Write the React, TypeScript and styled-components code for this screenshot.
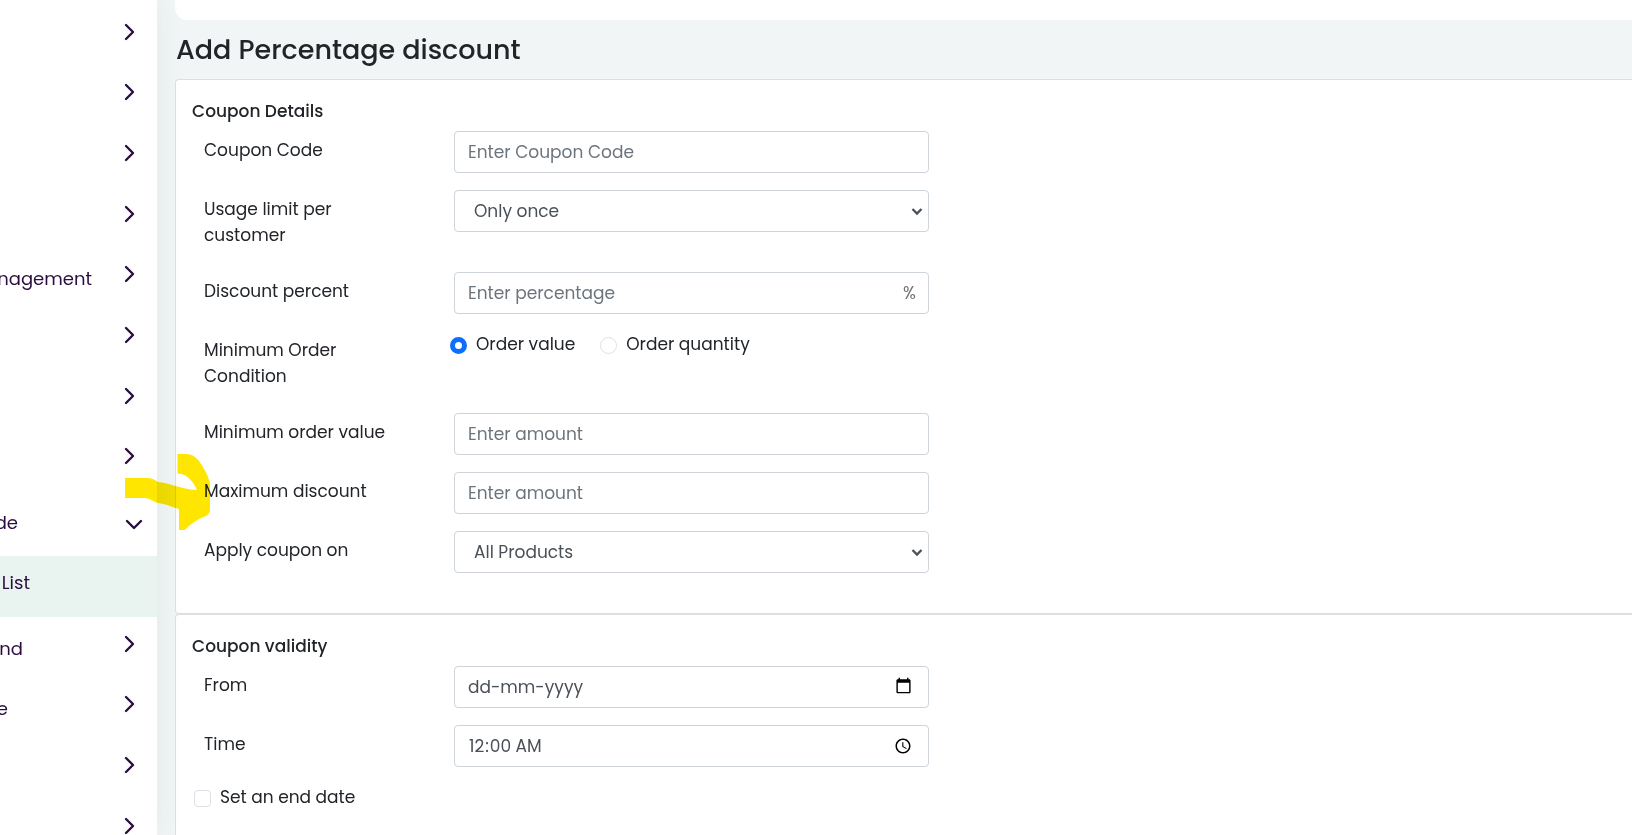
import React from "react";
import styled, { createGlobalStyle, css } from "styled-components";

const GlobalStyle = createGlobalStyle`
  *, *::before, *::after { box-sizing: border-box; }
  body {
    margin: 0;
    background: #f1f5f6;
    color: #212529;
    font-family: Poppins, Inter, "Open Sans", sans-serif;
    font-size: 17px;
    line-height: 26px;
  }
`;

const Page = styled.div`
  position: relative;
  display: flex;
  height: 100vh;
  overflow: hidden;
`;

const Sidebar = styled.nav`
  flex: 0 0 157px;
  z-index: 1;
  background: #fff;
  box-shadow: 0 0 28px rgba(30, 50, 50, 0.07);
`;

const NavList = styled.ul<{ $top: number }>`
  list-style: none;
  margin: 0;
  padding: ${(p) => p.$top}px 0 0;
`;

const NavItem = styled.li`
  margin-bottom: 1px;
  &:nth-child(3n + 1) {
    margin-bottom: 0;
  }
`;

const NavButton = styled.button<{ $open?: boolean }>`
  display: flex;
  align-items: center;
  justify-content: space-between;
  width: 100%;
  height: ${(p) => (p.$open ? "65px" : "60px")};
  padding: ${(p) => (p.$open ? "0 14px 0 0" : "0 19px 8px 0")};
  border: 0;
  background: none;
  color: #2b0d42;
  font: inherit;
  font-size: 18px;
`;

const NavText = styled.span<{ $end: number; $raised?: boolean }>`
  width: ${(p) => p.$end}px;
  padding-top: ${(p) => (p.$raised ? "0" : "10px")};
  padding-bottom: ${(p) => (p.$raised ? "2px" : "0")};
  display: flex;
  justify-content: flex-end;
  white-space: nowrap;
`;

const SubLink = styled.a`
  display: flex;
  align-items: center;
  height: 61px;
  padding-bottom: 6px;
  background: #e9f3f0;
  color: #2b0d42;
  font-size: 18px;
  text-decoration: none;
`;

const Main = styled.main`
  flex: 1;
  min-width: 0;
  display: flex;
  flex-direction: column;
  padding-left: 18px;
`;

const TopBar = styled.header`
  flex: 0 0 20px;
  background: #fff;
  border-bottom-left-radius: 12px;
`;

const PageTitle = styled.h1`
  margin: 0;
  padding: 12px 0 11px 1px;
  font-size: 27px;
  font-weight: 500;
  line-height: 36px;
`;

const Card = styled.section<{ $last?: boolean }>`
  flex: none;
  padding: 18px 16px ${(p) => (p.$last ? "40px" : "23px")};
  background: #fff;
  border: 1px solid #dfdfdf;
  border-right: 0;
  border-radius: 4px 0 0 4px;
`;

const CardTitle = styled.h2`
  margin: 0 0 7px;
  font-size: 17px;
  font-weight: 500;
  line-height: 26px;
`;

const Row = styled.div`
  display: grid;
  grid-template-columns: minmax(0, 202px) minmax(0, 475px);
  column-gap: 48px;
  align-items: start;
  padding: 0 12px 17px;
`;

const labelText = css`
  padding: 6px 0 7px;
  line-height: 26px;
`;

const Label = styled.label`
  ${labelText}
`;

const GroupLabel = styled.span`
  ${labelText}
`;

const ControlWrap = styled.div`
  position: relative;
  display: flex;
`;

const controlBox = css`
  width: 100%;
  height: 42px;
  border: 1px solid #ced4da;
  border-radius: 4px;
  background: #fff;
  color: #495057;
  font: inherit;
`;

const Input = styled.input`
  ${controlBox}
  padding: 6px 13px;
  &::placeholder {
    color: ${(p) => (p.name === "from" ? "#495057" : "#6c757d")};
    opacity: 1;
  }
`;

const Select = styled.select`
  ${controlBox}
  appearance: none;
  padding: 6px 30px 6px 19px;
`;

const SelectArrow = styled.svg`
  position: absolute;
  right: 5px;
  top: 14px;
  pointer-events: none;
`;

const Suffix = styled.span`
  position: absolute;
  right: 13px;
  top: 8px;
  color: #6f6f6f;
`;

const PickerButton = styled.button`
  position: absolute;
  right: 17px;
  top: 11px;
  display: flex;
  padding: 0;
  border: 0;
  background: none;
  color: #000;
`;

const Choices = styled.div`
  display: flex;
  gap: 25px;
  margin-left: -4px;
`;

const Choice = styled.label`
  display: flex;
  align-items: center;
  gap: 9px;
`;

const Tick = styled.input`
  appearance: none;
  width: 17px;
  height: 17px;
  margin: 2px 0 0;
  border: 1px solid #dee0e5;
  border-radius: ${(p) => (p.type === "radio" ? "50%" : "4px")};
  background: #fff;
  &:checked {
    border: 5px solid #0d6efd;
  }
`;

const EndDate = styled.div`
  display: flex;
  padding: 0 2px;
`;

const Marker = styled.svg`
  position: absolute;
  left: 125px;
  top: 453px;
  z-index: 2;
  mix-blend-mode: multiply;
  pointer-events: none;
`;

const Chevron = ({ down }: { down?: boolean }) => (
  <svg
    width="18"
    height="18"
    viewBox="0 0 18 18"
    fill="none"
    stroke="#2b0d42"
    strokeWidth="2.4"
    strokeLinecap="round"
    strokeLinejoin="round"
    aria-hidden="true"
  >
    {down ? <path d="M2 6l7 7 7-7" /> : <path d="M6 2l7 7-7 7" />}
  </svg>
);

const CalendarIcon = () => (
  <svg width="17" height="17" viewBox="0 0 24 24" fill="currentColor" aria-hidden="true">
    <path d="M20 3h-1V1h-2v2H7V1H5v2H4c-1.1 0-2 .9-2 2v16c0 1.1.9 2 2 2h16c1.1 0 2-.9 2-2V5c0-1.1-.9-2-2-2zm0 18H4V8h16v13z" />
  </svg>
);

const Dropdown = ({ id, value }: { id: string; value: string }) => (
  <ControlWrap>
    <Select id={id}>
      <option>{value}</option>
    </Select>
    <SelectArrow width="14" height="14" viewBox="0 0 14 14" fill="none" aria-hidden="true">
      <path d="M2.500 5l4.500 4.500L11.500 5" stroke="#495057" strokeWidth="2.3" />
    </SelectArrow>
  </ControlWrap>
);

type Nav = { text?: string; end?: number };

const NavRow = ({ text, end = 0 }: Nav) => (
  <NavItem>
    <NavButton type="button" aria-label={text ? undefined : "Expand section"}>
      <NavText $end={end}>{text}</NavText>
      <Chevron />
    </NavButton>
  </NavItem>
);

const upper: Nav[] = [{}, {}, {}, {}, { text: "nagement", end: 92 }, {}, {}, {}];
const lower: Nav[] = [{ text: "nd", end: 23 }, { text: "e", end: 8 }, {}, {}];

export default function App() {
  return (
    <>
      <GlobalStyle />
      <Page>
        <Sidebar>
          <NavList $top={6}>
            {upper.map((n, i) => (
              <NavRow key={i} {...n} />
            ))}
          </NavList>
          <NavButton type="button" $open aria-expanded="true">
            <NavText $end={18} $raised>de</NavText>
            <Chevron down />
          </NavButton>
          <SubLink href="#list">
            <NavText $end={30} $raised>List</NavText>
          </SubLink>
          <NavList $top={1}>
            {lower.map((n, i) => (
              <NavRow key={i} {...n} />
            ))}
          </NavList>
        </Sidebar>

        <Main>
          <TopBar />
          <PageTitle>Add Percentage discount</PageTitle>

          <Card>
            <CardTitle>Coupon Details</CardTitle>
            <Row>
              <Label htmlFor="code">Coupon Code</Label>
              <Input id="code" name="code" placeholder="Enter Coupon Code" />
            </Row>
            <Row>
              <Label htmlFor="usage">Usage limit per customer</Label>
              <Dropdown id="usage" value="Only once" />
            </Row>
            <Row>
              <Label htmlFor="percent">Discount percent</Label>
              <ControlWrap>
                <Input id="percent" name="percent" placeholder="Enter percentage" />
                <Suffix>%</Suffix>
              </ControlWrap>
            </Row>
            <Row role="radiogroup" aria-labelledby="condition">
              <GroupLabel id="condition">Minimum Order Condition</GroupLabel>
              <Choices>
                <Choice>
                  <Tick type="radio" name="condition" defaultChecked />
                  Order value
                </Choice>
                <Choice>
                  <Tick type="radio" name="condition" />
                  Order quantity
                </Choice>
              </Choices>
            </Row>
            <Row>
              <Label htmlFor="minimum">Minimum order value</Label>
              <Input id="minimum" name="minimum" placeholder="Enter amount" />
            </Row>
            <Row>
              <Label htmlFor="maximum">Maximum discount</Label>
              <Input id="maximum" name="maximum" placeholder="Enter amount" />
            </Row>
            <Row>
              <Label htmlFor="apply">Apply coupon on</Label>
              <Dropdown id="apply" value="All Products" />
            </Row>
          </Card>

          <Card $last>
            <CardTitle>Coupon validity</CardTitle>
            <Row>
              <Label htmlFor="from">From</Label>
              <ControlWrap>
                <Input id="from" name="from" placeholder="dd-mm-yyyy" />
                <PickerButton type="button" aria-label="Choose date">
                  <CalendarIcon />
                </PickerButton>
              </ControlWrap>
            </Row>
            <Row>
              <Label htmlFor="time">Time</Label>
              <Input id="time" name="time" type="time" defaultValue="00:00" />
            </Row>
            <EndDate>
              <Choice>
                <Tick type="checkbox" />
                Set an end date
              </Choice>
            </EndDate>
          </Card>
        </Main>

        <Marker width="87" height="78" viewBox="125 453 87 78" aria-hidden="true">
          <path
            fill="#ffe600"
            d="M125 478H147C152 478 155 480 158 482C170 483 180 489 197 490C194 483 187 473 177.500 473.500V454H184C191 454 194 455 199 461C204 468 208 475 210 483V510C210 513 208 515 206 516C198 519 190 524 185 530H179V509C174 508 167 504 158 503C153 502 151 498 144 498H125Z"
          />
        </Marker>
      </Page>
    </>
  );
}
